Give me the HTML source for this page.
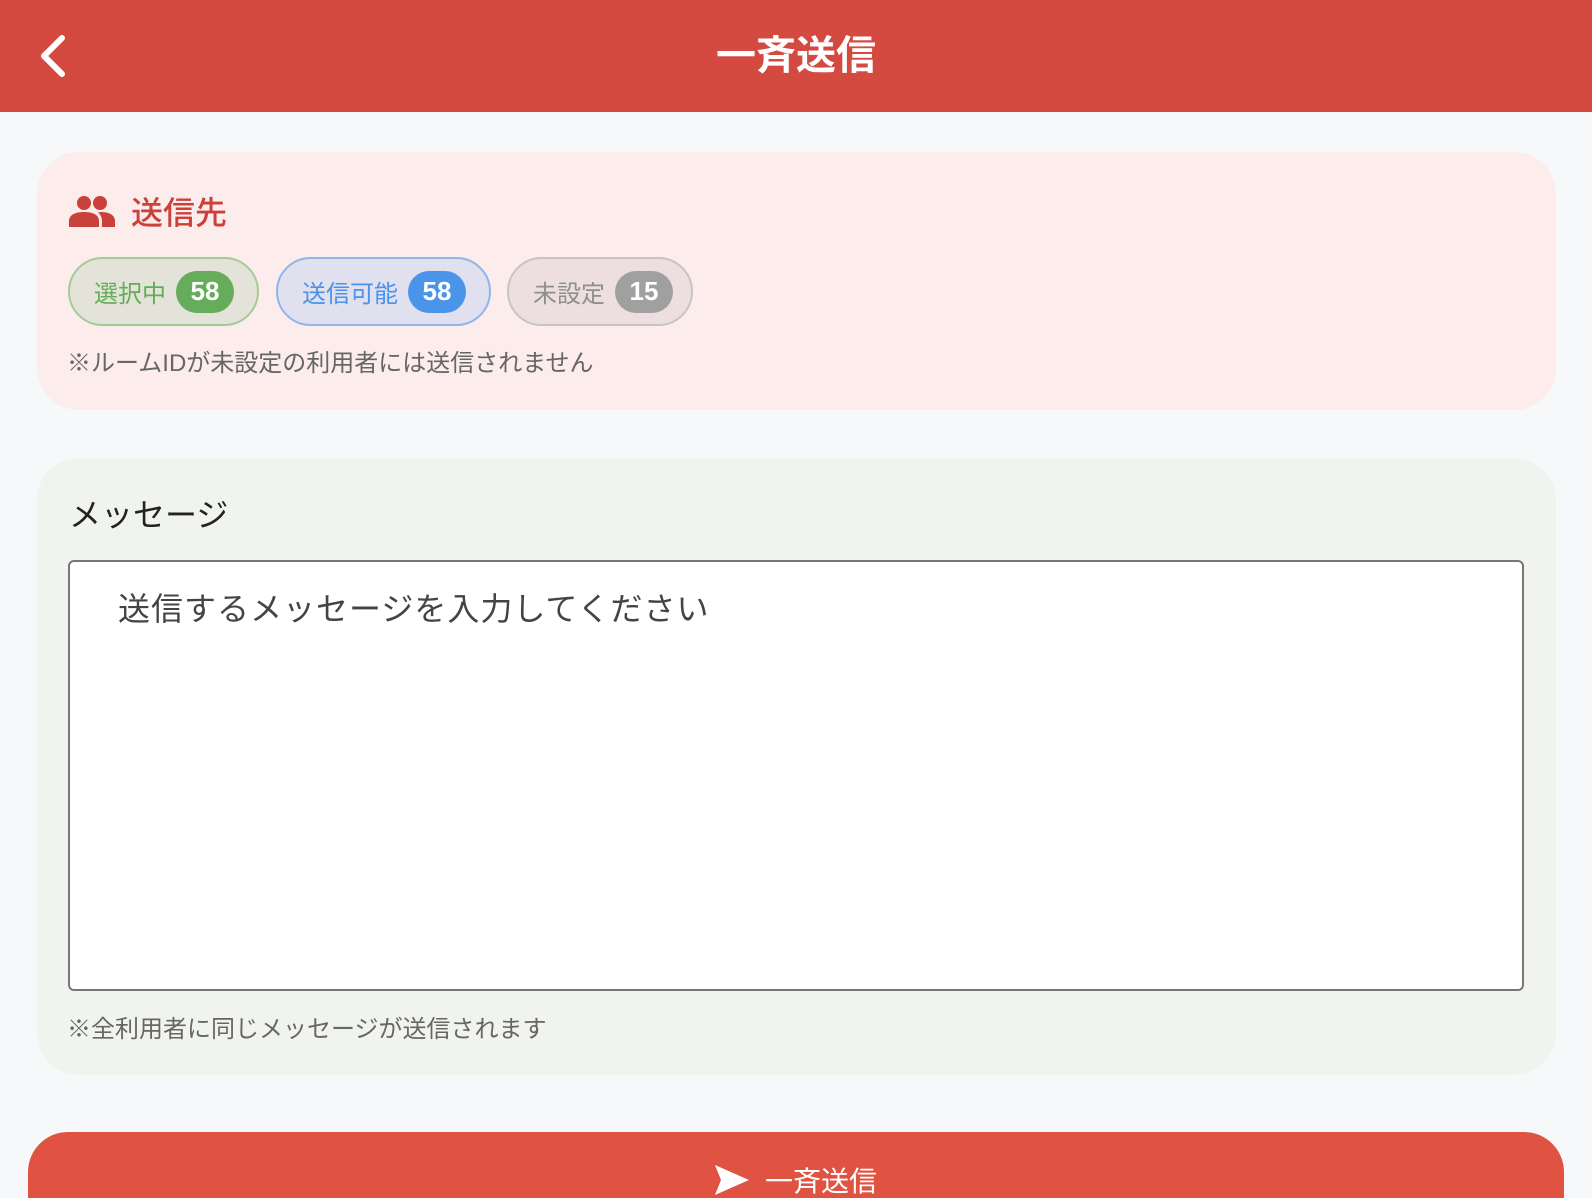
<!DOCTYPE html>
<html style="width:1592px;height:1198px;overflow:hidden"><head><meta charset="utf-8"><style>
*{box-sizing:border-box;margin:0;padding:0}
body{width:1592px;height:1198px;overflow:hidden;background:#f7f8fa;font-family:"Liberation Sans","Noto Sans CJK JP",sans-serif;position:relative}
.hdr{position:absolute;left:0;top:0;width:1592px;height:112px;background:#d44a40;color:#fff}
.hdr h1{position:absolute;left:0;right:0;top:28px;text-align:center;font-size:40px;font-weight:700;line-height:56px}
.back{position:absolute;left:38px;top:34px}
.card1{position:absolute;left:37px;top:152px;width:1519px;height:258px;background:#fdecec;border-radius:42px}
.ttl{position:absolute;left:69px;top:188px;font-size:32px;color:#c9413a;display:flex;align-items:center;font-weight:500}
.chip{position:absolute;top:257px;height:69px;border-radius:35px;border:2px solid;display:flex;align-items:center;padding-left:24px;font-size:24px}
.badge{margin-left:10px;height:42px;min-width:58px;border-radius:21px;color:#fff;font-weight:700;font-size:26px;display:flex;align-items:center;justify-content:center}
.note{position:absolute;font-size:24px;color:#666}
.card2{position:absolute;left:37px;top:458px;width:1519px;height:617px;background:#f1f4ee;border-radius:42px}
.lbl{position:absolute;left:69px;top:490px;font-size:32px;color:#222}
.ta{position:absolute;left:68px;top:560px;width:1456px;height:431px;background:#fff;border:2px solid #777;border-radius:6px}
.ta span{position:absolute;left:48px;top:22px;font-size:32px;color:#444;letter-spacing:1px}
.btn{position:absolute;left:28px;top:1132px;width:1536px;height:66px;background:#e05242;border-radius:40px 40px 0 0;color:#fff;overflow:hidden}
.btn div{position:absolute;left:0;right:0;top:28px;text-align:center;font-size:28px;display:flex;justify-content:center;align-items:center;gap:16px}
</style></head><body>
<div class="hdr">
<svg class="back" width="30" height="44" viewBox="0 0 30 44"><path d="M24 4 L6 22 L24 40" fill="none" stroke="#fff" stroke-width="6" stroke-linecap="round" stroke-linejoin="round"/></svg>
<h1>一斉送信</h1></div>
<div class="card1"></div>
<div class="ttl"><svg width="46" height="32" viewBox="0 0 46 32"><circle cx="15" cy="8" r="7" fill="#c9413a"/><circle cx="31" cy="8" r="7" fill="#c9413a"/><path d="M0 32 V26 C0 19 8 17 15 17 C22 17 30 19 30 26 V32Z" fill="#c9413a"/><path d="M32 17 C38 17 46 19 46 26 V32 H33 V26 C33 22 31 19 29 17.5Z" fill="#c9413a"/></svg><span style="margin-left:16px">送信先</span></div>
<div class="chip" style="left:68px;width:191px;background:#e4e3d9;border-color:#a2cc96;color:#64ad57">選択中<span class="badge" style="background:#67ac5b">58</span></div>
<div class="chip" style="left:276px;width:215px;background:#e0e0ee;border-color:#8db6ec;color:#4a92ea">送信可能<span class="badge" style="background:#4a95ea">58</span></div>
<div class="chip" style="left:507px;width:186px;background:#eddfdf;border-color:#c8c4c4;color:#8f8f8f">未設定<span class="badge" style="background:#a0a0a0">15</span></div>
<div class="note" style="left:67px;top:343px">※ルームIDが未設定の利用者には送信されません</div>
<div class="card2"></div>
<div class="lbl">メッセージ</div>
<div class="ta"><span>送信するメッセージを入力してください</span></div>
<div class="note" style="left:67px;top:1009px">※全利用者に同じメッセージが送信されます</div>
<div class="btn"><div><svg width="34" height="30" viewBox="0 0 34 30"><path d="M0 0 L34 15 L0 30 L6 15Z" fill="#fff"/></svg><span>一斉送信</span></div></div>
</body></html>
